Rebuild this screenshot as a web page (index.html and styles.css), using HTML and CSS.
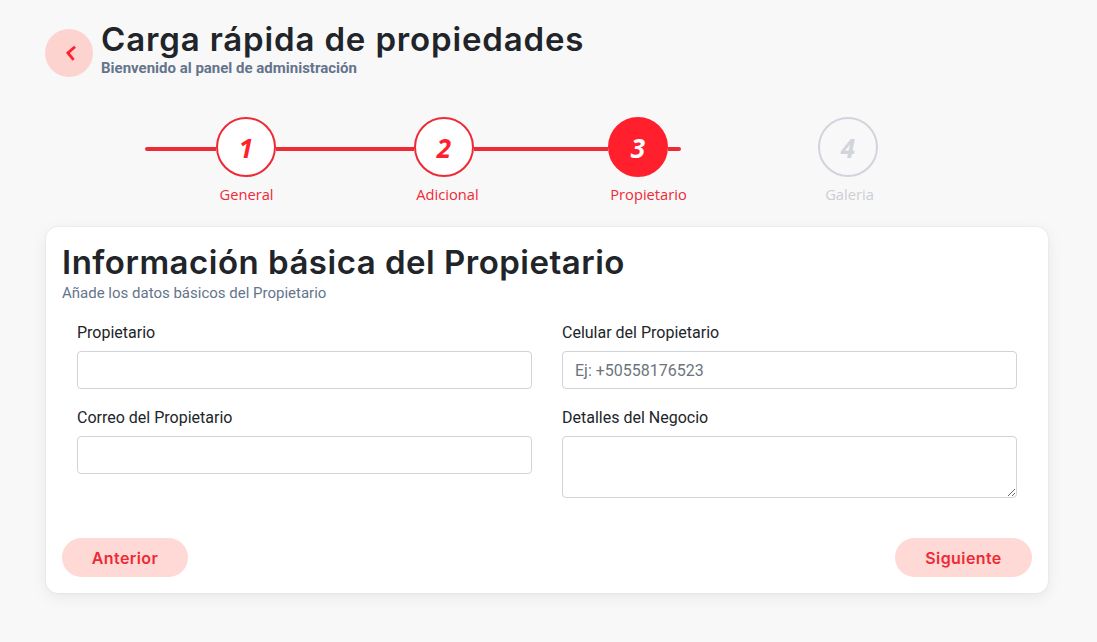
FILE: index.html
```html
<!DOCTYPE html>
<html>
  <head>
    <meta charset="UTF-8" />
    <title>Carga rápida de propiedades</title>
    <link rel="stylesheet" href="styles.css">
  </head>

  <body>
    <div class="page-header">
      <a class="back-button" href="#">
        <svg width="20" height="20" viewBox="0 0 20 20">
          <path d="M16 3.8 L8.9 10 L14.6 16.8" fill="none" stroke="#ff1f2d" stroke-width="2.8" />
        </svg>
      </a>
      <div class="page-title">
        <h1>Carga rápida de propiedades</h1>
        <p>Bienvenido al panel de administración</p>
      </div>
    </div>

    <div class="stepper">
      <div class="step-track">
        <div class="line line-start"></div>
        <div class="circle done">1</div>
        <div class="line line-a"></div>
        <div class="circle done">2</div>
        <div class="line line-b"></div>
        <div class="circle current">3</div>
        <div class="line line-end"></div>
        <div class="circle pending">4</div>
      </div>
      <div class="step-labels">
        <span class="active">General</span>
        <span class="active">Adicional</span>
        <span class="active">Propietario</span>
        <span>Galeria</span>
      </div>
    </div>

    <div class="card">
      <h2>Información básica del Propietario</h2>
      <p class="card-subtitle">Añade los datos básicos del Propietario</p>

      <div class="form-grid">
        <div class="form-column">
          <div class="field">
            <label>Propietario</label>
            <input type="text" />
          </div>
          <div class="field">
            <label>Correo del Propietario</label>
            <input type="text" />
          </div>
        </div>
        <div class="form-column">
          <div class="field">
            <label>Celular del Propietario</label>
            <input type="text" placeholder="Ej: +50558176523" />
          </div>
          <div class="field">
            <label>Detalles del Negocio</label>
            <textarea></textarea>
          </div>
        </div>
      </div>

      <div class="card-actions">
        <button class="btn btn-prev">Anterior</button>
        <button class="btn btn-next">Siguiente</button>
      </div>
    </div>
  </body>
</html>
```

FILE: styles.css
```css
* {
  box-sizing: border-box;
}

body {
  margin: 0;
  padding: 20px 49px 0 45px;
  height: 642px;
  overflow: hidden;
  background-color: #f8f8f9;
  font-family: Roboto, sans-serif;
  color: #212529;
}

.page-header {
  display: flex;
  align-items: flex-start;
  gap: 8px;
}

.back-button {
  display: flex;
  justify-content: center;
  align-items: center;
  width: 48px;
  height: 48px;
  margin-top: 9px;
  border-radius: 50%;
  background-color: #fdd3d0;
}

.page-title h1 {
  margin: 0 0 1px;
  font-family: Inter, sans-serif;
  font-size: 33px;
  font-weight: 600;
  line-height: 39px;
  letter-spacing: 0.85px;
  color: #212529;
}

.page-title p {
  margin: 0;
  font-size: 15px;
  font-weight: 700;
  line-height: 16px;
  color: #64748b;
}

.stepper {
  margin-top: 40px;
  margin-left: 100px;
}

.step-track {
  display: flex;
  align-items: center;
  height: 60px;
}

.line {
  height: 4px;
  margin-top: 4px;
  background-color: #ee2a35;
}

.line-start {
  width: 71px;
  border-radius: 2px 0 0 2px;
}

.line-a {
  width: 138px;
}

.line-b {
  width: 134px;
}

.line-end {
  width: 13px;
  margin-right: 137px;
  border-radius: 0 2px 2px 0;
}

.circle {
  display: flex;
  justify-content: center;
  align-items: center;
  width: 60px;
  height: 60px;
  padding-top: 2px;
  border-radius: 50%;
  border: 2px solid #ee2a35;
  background-color: white;
  font-family: "Open Sans", sans-serif;
  font-size: 26px;
  font-style: italic;
  font-weight: 700;
  color: #ff1f2d;
}

.circle.current {
  background-color: #ff1f2d;
  border-color: #ff1f2d;
  color: white;
}

.circle.pending {
  background-color: transparent;
  border-color: #d1d5db;
  color: #d1d5db;
}

.step-labels {
  display: flex;
  margin-top: 7px;
  margin-left: 1px;
  font-family: "Open Sans", sans-serif;
  font-size: 14.7px;
  line-height: 20px;
  color: #ccced2;
}

.step-labels span {
  width: 201px;
  text-align: center;
}

.step-labels .active {
  color: #ee2a35;
}

.card {
  height: 366px;
  margin-top: 23px;
  margin-left: 1px;
  padding: 15px 16px 16px;
  border-radius: 12px;
  background-color: white;
  box-shadow: 0 0 2px rgba(0, 0, 0, 0.1), 0 4px 16px rgba(0, 0, 0, 0.07);
  display: flex;
  flex-direction: column;
}

.card h2 {
  margin: 0 0 1px;
  font-family: Inter, sans-serif;
  font-size: 33px;
  font-weight: 600;
  line-height: 40px;
  letter-spacing: 0.5px;
  color: #212529;
}

.card-subtitle {
  margin: 0;
  font-size: 15px;
  line-height: 20px;
  color: #64748b;
}

.form-grid {
  display: flex;
  gap: 30px;
  margin-top: 20px;
  padding: 0 15px;
}

.form-column {
  flex: 1;
}

.field {
  margin-bottom: 19px;
}

.field label {
  display: block;
  margin-bottom: 8px;
  font-size: 16px;
  line-height: 20px;
  color: #212529;
}

.field input,
.field textarea {
  display: block;
  width: 100%;
  height: 38px;
  padding: 6px 12px;
  border: 1px solid #ced4da;
  border-radius: 4px;
  background-color: white;
  font-family: Roboto, sans-serif;
  font-size: 16px;
}

.field textarea {
  height: 62px;
}

.field input::placeholder {
  color: #6c757d;
  opacity: 1;
}

.card-actions {
  display: flex;
  justify-content: space-between;
  margin-top: auto;
}

.btn {
  height: 39px;
  border: none;
  border-radius: 20px;
  background-color: #ffd9d6;
  font-family: Inter, sans-serif;
  font-size: 16px;
  font-weight: 600;
  letter-spacing: 0.4px;
  color: #ee2a35;
}

.btn-prev {
  width: 126px;
}

.btn-next {
  width: 137px;
}
```
